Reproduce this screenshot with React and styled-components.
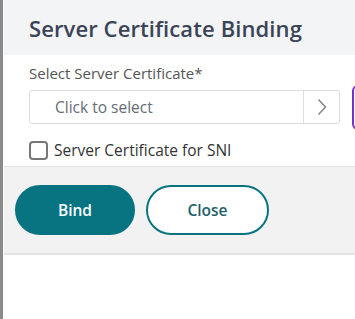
import React from 'react';
import styled, { createGlobalStyle } from 'styled-components';

const GlobalStyle = createGlobalStyle`
  html, body {
    margin: 0;
    padding: 0;
    background: #fff;
    font-family: "Open Sans", "Liberation Sans", sans-serif;
  }
  * { box-sizing: border-box; }
`;

const Page = styled.div`
  width: 355px;
  height: 319px;
  border-left: 3px solid #8a8a8a;
  padding-left: 1px;
  overflow: hidden;
  background: #fff;
`;

const Panel = styled.section`
  display: flex;
  flex-direction: column;
`;

const Header = styled.header`
  height: 55px;
  background: #f3f4f6;
  display: flex;
  align-items: center;
  padding-left: 25px;
`;

const Title = styled.h2`
  margin: 0;
  font-size: 22px;
  font-weight: 600;
  color: #3b4456;
  white-space: nowrap;
  letter-spacing: 0.1px;
`;

const Body = styled.div`
  padding: 8px 0 0 25px;
  height: 112px;
  border-bottom: 1px solid #e3e3e3;
`;

const Label = styled.label`
  display: block;
  font-size: 15px;
  color: #555;
  line-height: 20px;
  margin-bottom: 7px;
`;

const FieldRow = styled.div`
  display: flex;
  align-items: flex-start;
  gap: 12px;
  height: 34px;
`;

const SelectBox = styled.div`
  width: 311px;
  height: 34px;
  border: 1px solid #dcdcdc;
  border-radius: 3px;
  display: flex;
  align-items: stretch;
  flex-shrink: 0;
`;

const SelectText = styled.span`
  flex: 1;
  display: flex;
  align-items: center;
  padding-left: 25px;
  font-size: 15.5px;
  color: #666c75;
`;

const ChevronButton = styled.span`
  width: 36px;
  border-left: 1px solid #dcdcdc;
  display: flex;
  align-items: center;
  justify-content: center;
  color: #808080;
`;

const AddButton = styled.span`
  width: 40px;
  height: 45px;
  margin-top: -5px;
  border: 2px solid #7a2fd0;
  border-radius: 6px;
  flex-shrink: 0;
`;

const CheckRow = styled.label`
  display: flex;
  align-items: center;
  gap: 6px;
  margin-top: 17px;
  font-size: 15.5px;
  line-height: 19px;
  color: #333;
`;

const Box = styled.span`
  width: 19px;
  height: 19px;
  border: 2px solid #777;
  border-radius: 4px;
`;

const Footer = styled.footer`
  background: #f2f2f2;
  height: 88px;
  border-bottom: 2px solid #e3e3e3;
  display: flex;
  align-items: center;
  gap: 11px;
  padding: 0 0 0 11px;
`;

const Button = styled.button`
  width: ${p => (p.$primary ? '120px' : '123px')};
  height: 50px;
  border-radius: 25px;
  font-family: inherit;
  font-size: 15.5px;
  font-weight: 600;
  border: 2px solid #087482;
  background: ${p => (p.$primary ? '#087482' : '#fff')};
  color: ${p => (p.$primary ? '#fff' : '#1f5f6b')};
  cursor: pointer;
`;

export default function App() {
  return (
    <>
      <GlobalStyle />
      <Page>
        <Panel>
          <Header>
            <Title>Server Certificate Binding</Title>
          </Header>
          <Body>
            <Label>Select Server Certificate*</Label>
            <FieldRow>
              <SelectBox>
                <SelectText>Click to select</SelectText>
                <ChevronButton>
                  <svg width="10" height="18" viewBox="0 0 10 18" fill="none">
                    <path d="M1.5 1.5 L8.5 9 L1.5 16.5" stroke="currentColor" strokeWidth="1.4" />
                  </svg>
                </ChevronButton>
              </SelectBox>
              <AddButton />
            </FieldRow>
            <CheckRow>
              <Box />
              Server Certificate for SNI
            </CheckRow>
          </Body>
          <Footer>
            <Button $primary>Bind</Button>
            <Button>Close</Button>
          </Footer>
        </Panel>
      </Page>
    </>
  );
}
